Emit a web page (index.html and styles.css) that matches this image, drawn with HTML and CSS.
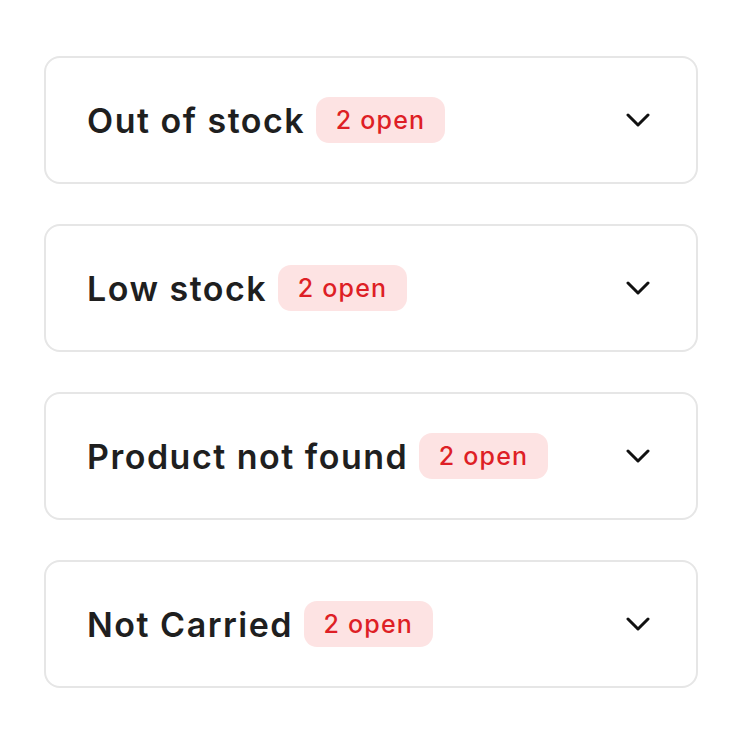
FILE: index.html
```html
<!DOCTYPE html>
<html lang="en">
<head>
    <meta charset="UTF-8">
    <meta name="viewport" content="width=device-width, initial-scale=1.0">
    <title>Issues</title>
    <link rel="stylesheet" href="styles.css">
</head>
<body>
    <div class="list">
        <div class="card">
            <div class="title">
                <span class="name">Out of stock</span>
                <span class="badge">2 open</span>
            </div>
            <svg class="chevron" viewBox="0 0 24 14" width="24" height="14"><path d="M2 2l10 10 10-10" /></svg>
        </div>
        <div class="card">
            <div class="title">
                <span class="name">Low stock</span>
                <span class="badge">2 open</span>
            </div>
            <svg class="chevron" viewBox="0 0 24 14" width="24" height="14"><path d="M2 2l10 10 10-10" /></svg>
        </div>
        <div class="card">
            <div class="title">
                <span class="name">Product not found</span>
                <span class="badge">2 open</span>
            </div>
            <svg class="chevron" viewBox="0 0 24 14" width="24" height="14"><path d="M2 2l10 10 10-10" /></svg>
        </div>
        <div class="card">
            <div class="title">
                <span class="name">Not Carried</span>
                <span class="badge">2 open</span>
            </div>
            <svg class="chevron" viewBox="0 0 24 14" width="24" height="14"><path d="M2 2l10 10 10-10" /></svg>
        </div>
    </div>
</body>
</html>
```

FILE: styles.css
```css
body {
    margin: 0;
    background: #ffffff;
    font-family: 'Inter', sans-serif;
    color: #1f1f1f;
}

.list {
    display: flex;
    flex-direction: column;
    gap: 40px;
    padding: 56px 46px 0 44px;
}

.card {
    display: flex;
    align-items: center;
    justify-content: space-between;
    height: 128px;
    box-sizing: border-box;
    padding: 0 46px 0 41px;
    border: 2px solid #e6e6e6;
    border-radius: 16px;
}

.title {
    display: flex;
    align-items: center;
    gap: 12px;
}

/* wide tracking to match the grotesk in the mockup */
.name {
    font-size: 34px;
    font-weight: 600;
    letter-spacing: 1.5px;
    margin-right: -1.5px;
}

.badge {
    display: inline-flex;
    align-items: center;
    height: 46px;
    padding: 0 20px;
    border-radius: 13px;
    background: #fde3e3;
    color: #de1f26;
    font-size: 25px;
    font-weight: 500;
    letter-spacing: 1.2px;
}

.chevron {
    fill: none;
    stroke: #111111;
    stroke-width: 3;
    stroke-linecap: round;
    stroke-linejoin: round;
}
```
